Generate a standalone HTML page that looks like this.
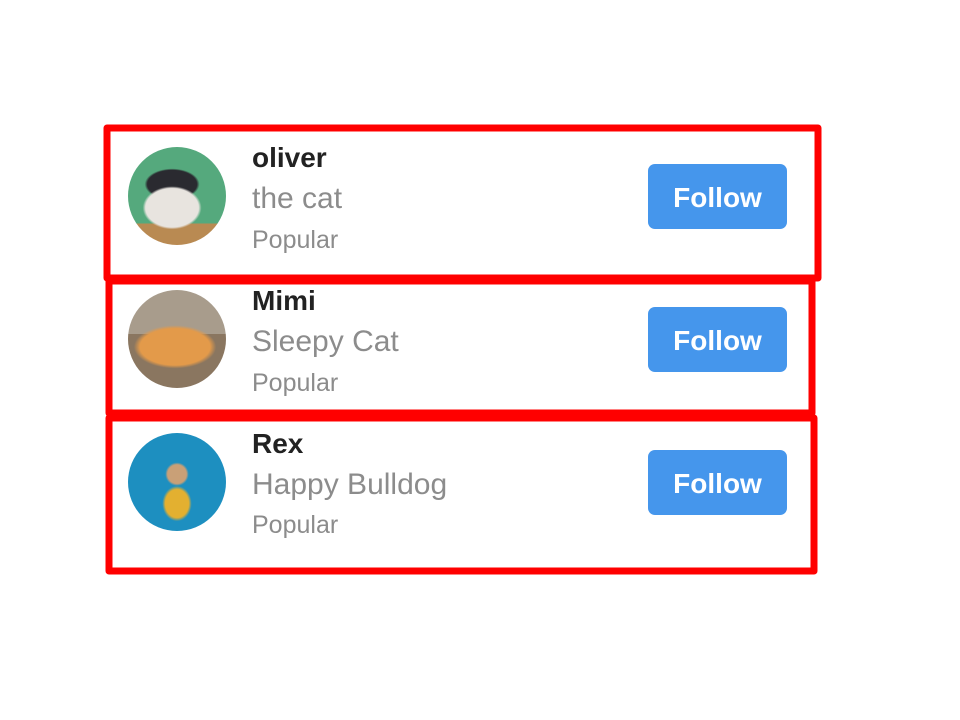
<!DOCTYPE html>
<html><head><style>
body{margin:0;width:960px;height:720px;background:#fff;position:relative;font-family:"Liberation Sans",Arial,Helvetica,sans-serif;overflow:hidden}
.av{position:absolute;left:128px;width:98px;height:98px;border-radius:50%}
.t{position:absolute;left:252px;white-space:nowrap;font-family:"Liberation Sans",Arial,Helvetica,sans-serif}
.n{font-weight:bold;font-size:28px;color:#222}
.s{font-size:30px;color:#8c8c8c}
.p{font-size:25px;color:#8c8c8c}
.b{position:absolute;left:648px;width:139px;height:65px;background:#4596ec;border-radius:7px;color:#fff;font-weight:bold;font-size:28px;text-align:center;line-height:67px}
</style></head><body>
<svg width="960" height="720" style="position:absolute;left:0;top:0">
<g fill="none" stroke="#ff0000" stroke-width="7" stroke-linejoin="round">
<rect x="107" y="128" width="711" height="150"/>
<rect x="109" y="281" width="703" height="132"/>
<rect x="109" y="418" width="705" height="153"/>
</g>
</svg>
<div class="av" style="top:147px;background:radial-gradient(ellipse 30% 22% at 45% 62%,#e8e4df 0 90%,transparent 100%),radial-gradient(ellipse 28% 16% at 45% 38%,#2a2a30 0 90%,transparent 100%),linear-gradient(#55a97d 0 78%,#b98a52 78%)"></div>
<div class="av" style="top:290px;background:radial-gradient(ellipse 42% 22% at 48% 58%,#e39a4a 0 85%,transparent 100%),linear-gradient(#a89c8c 0 45%,#8a7660 45%)"></div>
<div class="av" style="top:433px;background:radial-gradient(ellipse 15% 18% at 50% 72%,#e3b030 0 80%,transparent 100%),radial-gradient(ellipse 12% 12% at 50% 42%,#c9a077 0 80%,transparent 100%),#1d8fc0"></div>
<div class="t n" style="top:142px">oliver</div>
<div class="t s" style="top:182px">the cat</div>
<div class="t p" style="top:226px">Popular</div>
<div class="t n" style="top:285px">Mimi</div>
<div class="t s" style="top:325px">Sleepy Cat</div>
<div class="t p" style="top:369px">Popular</div>
<div class="t n" style="top:428px">Rex</div>
<div class="t s" style="top:468px">Happy Bulldog</div>
<div class="t p" style="top:511px">Popular</div>
<div class="b" style="top:164px">Follow</div>
<div class="b" style="top:307px">Follow</div>
<div class="b" style="top:450px">Follow</div>
</body></html>
